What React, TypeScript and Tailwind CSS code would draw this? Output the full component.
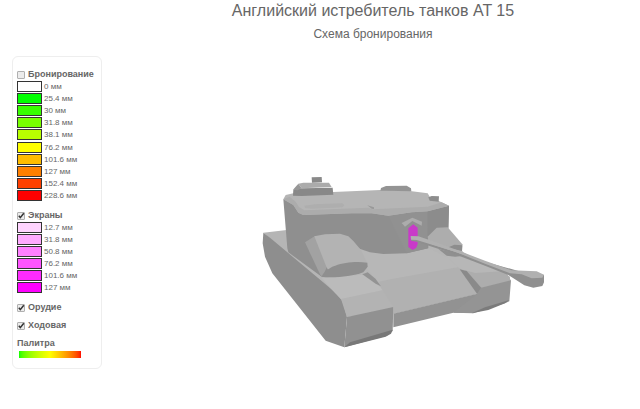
import React, { useState } from 'react';

type Layer = {
  label: string;
  color: string;
};

type CheckLabelProps = {
  id: string;
  label: string;
  checked: boolean;
  onChange: (checked: boolean) => void;
};

const armor: Layer[] = [
  { label: '0 мм', color: '#ffffff' },
  { label: '25.4 мм', color: '#00ff00' },
  { label: '30 мм', color: '#38ff00' },
  { label: '31.8 мм', color: '#78ff00' },
  { label: '38.1 мм', color: '#b8ff00' },
  { label: '76.2 мм', color: '#ffff00' },
  { label: '101.6 мм', color: '#ffbc00' },
  { label: '127 мм', color: '#ff8000' },
  { label: '152.4 мм', color: '#ff4000' },
  { label: '228.6 мм', color: '#ff0000' },
];

const screens: Layer[] = [
  { label: '12.7 мм', color: '#ffd4ff' },
  { label: '31.8 мм', color: '#ffaaff' },
  { label: '50.8 мм', color: '#ff80ff' },
  { label: '76.2 мм', color: '#ff55ff' },
  { label: '101.6 мм', color: '#ff2bff' },
  { label: '127 мм', color: '#ff00ff' },
];

const CheckLabel = ({ id, label, checked, onChange }: CheckLabelProps) => (
  <div className="flex items-center gap-[3px]">
    <span className="relative flex h-2 w-2 shrink-0">
      <input
        id={id}
        type="checkbox"
        checked={checked}
        onChange={(e) => onChange(e.target.checked)}
        className="peer h-2 w-2 appearance-none rounded-[1px] border border-[#b0b0b0] bg-[#ececec]"
      />
      <svg
        viewBox="0 0 8 8"
        className="pointer-events-none absolute inset-0 hidden h-2 w-2 peer-checked:block"
      >
        <path d="M1.8 3.8L3.3 5.6L6.8 1.2" fill="none" stroke="#333" strokeWidth="1.5" />
      </svg>
    </span>
    <label htmlFor={id} className="text-[9px] leading-[11px] font-bold">
      {label}
    </label>
  </div>
);

const LayerRow = ({ label, color }: Layer) => (
  <li className="flex items-center gap-[2px]">
    <span className="h-[11px] w-[25px] border border-[#333]" style={{ backgroundColor: color }} />
    <span className="text-[8px] leading-[11px]">{label}</span>
  </li>
);

const Tank = () => (
  <svg viewBox="-459 -369 1614 960" className="w-full" role="img" aria-label="AT 15">
    {/* hull top */}
    <path fill="#b5b5b5" d="M25 203L95 195L380 230L560 190L625 262L765 335L765 350L665 386L415 446L275 455L250 400Z" />
    {/* left track */}
    <path fill="#8e8e8e" d="M25 203L45 218L97 262L200 348L245 386L262 408L276 456L268 547L212 527L52 325L30 275L23 235Z" />
    <path fill="#bbbbbb" d="M200 340L335 328L386 376L258 403L240 384Z" />
    <path fill="#b3b3b3" d="M258 402L386 375L415 427L276 457Z" />
    <path fill="#919191" d="M276 456L415 426L413 498L395 512L268 547Z" />
    <path fill="#787878" d="M268 547L285 532L413 494L408 506L392 515Z" />
    {/* glacis plate */}
    <path fill="#b7b7b7" d="M305 250L345 262L420 266L520 248L580 280L612 308L415 342L375 360L335 310Z" />
    <path fill="#b1b1b1" d="M372 350L415 341L612 306L625 318L667 387L415 447L415 426L378 368Z" />
    <path fill="#929292" d="M415 446L667 386L660 440L650 444L595 443L415 487Z" />
    {/* right track */}
    <path fill="#b7b7b7" d="M560 262L640 275L745 322L660 328L612 309Z" />
    <path fill="#adadad" d="M630 316L660 324L752 318L768 347L678 369Z" />
    <path fill="#8a8a8a" d="M614 313L635 318L680 370L667 388Z" />
    <path fill="#949494" d="M678 368L768 346L763 409L750 415L655 445L595 443L666 387Z" />
    <path fill="#7b7b7b" d="M650 445L690 427L763 405L750 415L700 435Z" />
    <path fill="#909090" d="M550 252L628 272L600 275L575 272Z" />
    {/* turret body */}
    <path fill="#8f8f8f" d="M85 103L97 250L100 262L200 335L335 300L305 248L345 262L385 267L455 265L520 250L520 215L580 195L582 122L500 136Z" />
    <path fill="#919191" d="M400 152L470 142L518 138L518 250L455 265Z" />
    <path fill="#8c8c8c" d="M518 138L582 122L580 188L545 188L518 212Z" />
    {/* roof */}
    <path fill="#b5b5b5" d="M85 103L92 90L115 85L235 81L375 75L465 78L518 85L525 97L550 107L582 122L518 139L470 142L400 152L350 145L290 145L145 150L130 143L115 120Z" />
    <path fill="#acacac" d="M85 103L104 95L122 110L132 126L148 136L340 128L352 133L518 125L560 112L582 122L518 139L470 142L400 152L350 145L290 145L145 150L130 143L115 120Z" />
    <path fill="#aeaeae" d="M148 122L180 118L262 115L268 121L262 127L170 131L150 129Z" />
    <path fill="#999999" d="M337 121L357 127L357 132L350 131Z" />
    {/* hatches */}
    <path fill="#888888" d="M115 74L140 70L233 68L235 89L140 93L114 92Z" />
    <path fill="#ababab" d="M130 56L145 53L222 53L230 66L140 70Z" />
    <path fill="#979797" d="M114 74L130 56L140 70L128 76Z" />
    <path fill="#898989" d="M170 37L200 36L201 52L171 53Z" />
    <path fill="#949494" d="M376 77L378 69L393 63L455 62L468 70L469 79L430 78Z" />
    <path fill="#8d8d8d" d="M520 97L530 93L552 94L551 110L524 107Z" />
    {/* side casings */}
    <path fill="#a2a2a2" d="M150 232L180 213L216 305L202 335L195 328Z" />
    <path fill="#b3b3b3" d="M178 214L210 208L255 206L280 214L295 228L318 255L337 294L290 300L225 325L214 305Z" />
    <path fill="#8f8f8f" d="M200 335C215 300 280 286 337 293L338 305L325 322C290 335 230 340 200 335Z" />
    <path fill="#939393" d="M322 328L338 322L362 342L378 364L362 356Z" />
    <path fill="#adadad" d="M518 215L545 188L578 187L622 238L621 258L570 247L520 226Z" />
    <path fill="#8d8d8d" d="M577 248L598 239L622 241L621 258Z" />
    {/* gun mantlet */}
    <path fill="#acacac" d="M440 174L472 158L501 170L500 182L472 168L450 185Z" />
    <path fill="#c93ac9" d="M475 178L488 188L488 237L484 248L473 255L460 246L460 190Z" />
    {/* barrel */}
    <path fill="#8f8f8f" d="M468 222L490 224L690 290L790 318L867 330L867 352L862 363L835 368L808 361L760 330L690 302L600 268L485 230L468 227Z" />
    <path fill="#b0b0b0" d="M467 213L490 214L560 238L690 287L770 316L845 319L867 329L862 338L830 340L800 328L765 325L690 296L600 260L485 225L468 224Z" />
  </svg>
);

const App = () => {
  const [showArmor, setShowArmor] = useState<boolean>(false);
  const [showScreens, setShowScreens] = useState<boolean>(true);
  const [showGun, setShowGun] = useState<boolean>(true);
  const [showTracks, setShowTracks] = useState<boolean>(true);

  return (
    <div className="flex min-h-screen items-start bg-white pl-3 font-['Liberation_Sans',Arial,sans-serif] text-[#666]">
      <aside className="mt-14 w-[90px] shrink-0 rounded-md border border-[#eee] pt-3 pb-[10px] pl-1">
        <CheckLabel id="armor" label="Бронирование" checked={showArmor} onChange={setShowArmor} />
        <ul className="grid h-[122px] auto-rows-fr">
          {armor.map((layer) => (
            <LayerRow key={layer.label} {...layer} />
          ))}
        </ul>
        <div className="mt-2">
          <CheckLabel id="screens" label="Экраны" checked={showScreens} onChange={setShowScreens} />
        </div>
        <ul className="grid h-[73px] auto-rows-fr">
          {screens.map((layer) => (
            <LayerRow key={layer.label} {...layer} />
          ))}
        </ul>
        <div className="mt-2 flex flex-col gap-[7px]">
          <CheckLabel id="gun" label="Орудие" checked={showGun} onChange={setShowGun} />
          <CheckLabel id="tracks" label="Ходовая" checked={showTracks} onChange={setShowTracks} />
          <p className="text-[9px] leading-[11px] font-bold">Палитра</p>
        </div>
        <div className="mt-[2px] ml-[2px] h-[7px] w-[62px] bg-linear-to-r from-[#00ff00] via-[#ffff00] to-[#ff0000]" />
      </aside>

      <main className="min-w-0 flex-1">
        <header className="pl-1 text-center">
          <h1 className="pt-px text-[16px] leading-5">Английский истребитель танков AT 15</h1>
          <h2 className="mt-[5px] text-[12px] leading-4">Схема бронирования</h2>
        </header>
        <Tank />
      </main>
    </div>
  );
};

export default App;
